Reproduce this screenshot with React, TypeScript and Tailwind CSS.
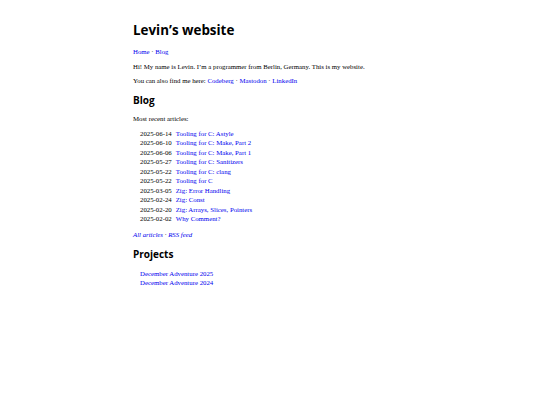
const articles = [
  ["2025-06-14", "Tooling for C: Astyle"],
  ["2025-06-10", "Tooling for C: Make, Part 2"],
  ["2025-06-06", "Tooling for C: Make, Part 1"],
  ["2025-05-27", "Tooling for C: Sanitizers"],
  ["2025-05-22", "Tooling for C: clang"],
  ["2025-05-22", "Tooling for C"],
  ["2025-03-05", "Zig: Error Handling"],
  ["2025-02-24", "Zig: Const"],
  ["2025-02-20", "Zig: Arrays, Slices, Pointers"],
  ["2025-02-02", "Why Comment?"],
];

const projects = ["December Adventure 2025", "December Adventure 2024"];

const link = "text-[#0000ee]";
const heading = "font-['Open_Sans',sans-serif] font-bold text-black";

export default function App() {
  return (
    <div className="min-h-[405px] bg-white font-['Liberation_Serif',serif] text-[6.8px] leading-[9.5px] text-black">
      <div className="mx-auto w-[274px] pt-[21px]">
        <h1 className={`${heading} text-[13.4px] leading-[18px]`}>Levin’s website</h1>
        <nav className="mt-[8px]">
          <a className={link}>Home</a> · <a className={link}>Blog</a>
        </nav>
        <p className="mt-[5px]">Hi! My name is Levin. I’m a programmer from Berlin, Germany. This is my website.</p>
        <p className="mt-[4.5px]">
          You can also find me here: <a className={link}>Codeberg</a> · <a className={link}>Mastodon</a> ·{" "}
          <a className={link}>LinkedIn</a>
        </p>

        <h2 className={`${heading} mt-[8px] text-[10px] leading-[14px]`}>Blog</h2>
        <p className="mt-[7px]">Most recent articles:</p>
        <table className="mt-[5px] ml-[7px] border-collapse">
          <tbody>
            {articles.map(([date, title], i) => (
              <tr key={i}>
                <td className="p-0 pr-[4px] leading-[9.5px]">{date}</td>
                <td className="p-0 leading-[9.5px]">
                  <a className={link}>{title}</a>
                </td>
              </tr>
            ))}
          </tbody>
        </table>
        <p className="mt-[6px] italic">
          <a className={link}>All articles</a> · <a className={link}>RSS feed</a>
        </p>

        <h2 className={`${heading} mt-[8px] text-[10px] leading-[14px]`}>Projects</h2>
        <ul className="mt-[8px] ml-[7px] leading-[9px]">
          {projects.map((p) => (
            <li key={p}>
              <a className={link}>{p}</a>
            </li>
          ))}
        </ul>
      </div>
    </div>
  );
}
